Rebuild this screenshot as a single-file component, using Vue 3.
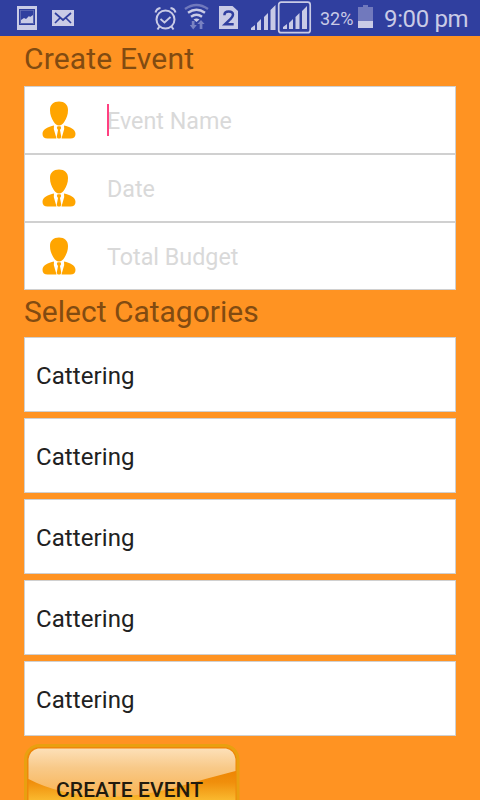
<script setup>
const fields = ['Event Name', 'Date', 'Total Budget']
const categories = ['Cattering', 'Cattering', 'Cattering', 'Cattering', 'Cattering']
</script>

<template>
  <div class="screen">
    <header class="status">
      <svg class="icons" width="318" height="36" viewBox="0 0 318 36">
        <g fill="#c9cbe6">
          <path fill-rule="evenodd" d="M17 6h20v24H17zM19 9v16h16V9z" />
          <path fill-rule="evenodd" d="M20 10h14v14H20zM20.800 10.800v12.400h12.400V10.800z" opacity=".35" />
          <path d="M21 23v-3l3-2 2 1 3-3 1 1 3-2v8z" />
          <path d="M52 10h22v16H52z" />
        </g>
        <path d="M55 13l8 7 8-7M55 23l5-5M71 23l-5-5" fill="none" stroke="#303f9f" stroke-width="1.700" />
        <g fill="none" stroke="#c9cbe6" stroke-width="2">
          <circle cx="165.500" cy="19.500" r="9" />
          <path d="M155.500 12.500q1-4 5-4.500M175.500 12.500q-1-4-5-4.500M159.500 26.500l-2 3M171.500 26.500l2 3" />
          <path d="M160.500 19l4 3.500 6-5.500" stroke-width="1.800" />
        </g>
        <g fill="none" stroke-width="2.400">
          <path d="M185 9q11.500-8 23 0" stroke="#7079bd" />
          <path d="M188 12.800q8.500-6 17 0M191 16.800q5.500-4 11 0" stroke="#c9cbe6" />
        </g>
        <path d="M193.500 19.500q3-2 6 0l-3 2.500z" fill="#c9cbe6" />
        <path d="M191.800 21h2.700v4h2.300L193.200 29.500 189.800 25h2zM199.700 29h2.700v-5h2.200L201 20l-3.700 4h2.400z" fill="#7982c2" />
        <path d="M219 6h13.500l5.500 5v18H219z" fill="#c9cbe6" />
        <path d="M224.400 15.200q0-3.700 4.300-3.700t4.300 3.300q0 2-2.700 4.400l-5.300 5.100h8.700" fill="none" stroke="#303f9f" stroke-width="2.500" />
        <g fill="#c9cbe6">
          <path d="M251 30v-2l4-3v5zM257 30v-7l4-4v11zM264 30V17l4-4v17zM270.500 30V10l5-5v25z" />
          <path d="M283 29v-2l4-3v5zM289 29v-6l4-4v10zM295.500 29V17l4-4v16zM302 29V11l5-5v23z" />
        </g>
        <rect x="278.700" y="2.200" width="31.500" height="30.500" rx="2.500" fill="none" stroke="#c9cbe6" stroke-width="1.700" />
      </svg>
      <span class="percent">32%</span>
      <svg class="battery" width="15" height="24" viewBox="0 0 15 24">
        <path d="M0 3h5V1h5v2h5v14H0z" fill="#7179bd" />
        <path d="M0 17h15v7H0z" fill="#c9cbe6" />
      </svg>
      <span class="clock">9:00 pm</span>
    </header>

    <main class="content">
      <h1 class="title first">Create Event</h1>
      <div v-for="(field, i) in fields" :key="field" class="field">
        <svg class="person" width="34" height="38" viewBox="0 0 34 38">
          <path
            d="M17 .5C11.500.5 8 3.500 8 9c0 5 1.500 8 3.500 11.500C13 23.300 15 24.500 17 24.500s4-1.200 5.500-4C24.500 17 26 14 26 9c0-5.500-3.500-8.500-9-8.500z"
            fill="#ffa500"
          />
          <path
            d="M12 24.500C6 26 .5 28 .5 33c0 3 2 4.500 5 4.500h9L11.800 28zM22 24.500c6 1.500 11.500 3.500 11.500 8.500 0 3-2 4.500-5 4.500h-9L22.200 28zM15.500 25.200h3l.7 1.800-1.200 2 1.300 7-1 1.500h-2.600l-1-1.500 1.300-7-1.200-2z"
            fill="#ffa500"
          />
        </svg>
        <span class="hint"><i v-if="i === 0" class="caret"></i>{{ field }}</span>
      </div>
      <h2 class="title second">Select Catagories</h2>
      <div class="list">
        <div v-for="(name, i) in categories" :key="i" class="category">{{ name }}</div>
      </div>
      <button class="create">
        <svg class="gloss" width="216" height="76" viewBox="0 0 216 76">
          <defs>
            <linearGradient id="base" gradientUnits="userSpaceOnUse" x1="0" y1="24" x2="0" y2="60">
              <stop offset="0" stop-color="#ed8300" />
              <stop offset=".4" stop-color="#f08f0c" />
              <stop offset="1" stop-color="#fcc236" />
            </linearGradient>
            <linearGradient id="shine" x1="0" y1="0" x2="0" y2="1">
              <stop offset="0" stop-color="#fde0b8" />
              <stop offset=".4" stop-color="#f8c988" />
              <stop offset="1" stop-color="#f9b352" />
            </linearGradient>
          </defs>
          <rect x="1.500" y="1.500" width="212.500" height="90" rx="14" fill="#ef870a" stroke="#e9a010" stroke-width="3" />
          <path d="M4.500 92V14Q6 4.500 15 4.500H202Q211 6 211.500 14V92z" fill="url(#base)" />
          <path d="M4.500 35V15Q6 6 14 4.500H202Q210 6 211.500 15V27Q180 35 150 44Q115 53 80 53Q35 51 4.500 35z" fill="url(#shine)" />
        </svg>
        <span class="label">CREATE EVENT</span>
      </button>
    </main>
  </div>
</template>

<style>
body {
  overflow: hidden;
}
</style>

<style scoped>
.screen {
  width: 480px;
  height: 800px;
  overflow: hidden;
  background: #ff9322;
  font-family: Roboto, sans-serif;
}
.status {
  display: flex;
  height: 36px;
  background: #303f9f;
  color: #c9cbe6;
  white-space: nowrap;
}
.icons {
  flex: none;
}
.percent {
  width: 40px;
  padding-left: 2px;
  box-sizing: border-box;
  font-size: 18px;
  line-height: 38px;
}
.battery {
  flex: none;
  margin-top: 4px;
}
.clock {
  margin-left: 11px;
  font-size: 24px;
  line-height: 38px;
  letter-spacing: -0.35px;
}
.content {
  padding: 3px 24px 0;
}
.title {
  height: 47px;
  margin: 0;
  font-size: 30px;
  font-weight: 400;
  line-height: 40px;
  color: #824b11;
}
.first {
  letter-spacing: 0.17px;
}
.second {
  height: 45px;
  margin-top: 2px;
}
.field {
  display: flex;
  height: 68px;
  box-sizing: border-box;
  border: 1px solid #d0d0d0;
  background: #fff;
}
.person {
  flex: none;
  margin: 14px 31px 0 17px;
}
.hint {
  position: relative;
  font-size: 23.3px;
  line-height: 68px;
  color: #d9d9d9;
}
.caret {
  position: absolute;
  left: 0;
  top: 17px;
  width: 2px;
  height: 32px;
  background: #ff4081;
}
.list {
  display: flex;
  flex-direction: column;
  gap: 6px;
}
.category {
  height: 75px;
  box-sizing: border-box;
  padding-left: 11px;
  border: 1px solid #d0d0d0;
  background: #fff;
  font-size: 24px;
  line-height: 77px;
  letter-spacing: 0.08px;
  color: #212121;
}
.create {
  position: relative;
  display: block;
  width: 216px;
  height: 76px;
  margin-top: 8px;
  padding: 0;
  border: 0;
  background: none;
  font-family: inherit;
}
.gloss {
  display: block;
}
.label {
  position: absolute;
  inset: 34px 0 auto 32px;
  text-align: left;
  font-size: 21px;
  font-weight: 500;
  line-height: 24px;
  letter-spacing: 0.1px;
  color: #211a0d;
}
</style>
